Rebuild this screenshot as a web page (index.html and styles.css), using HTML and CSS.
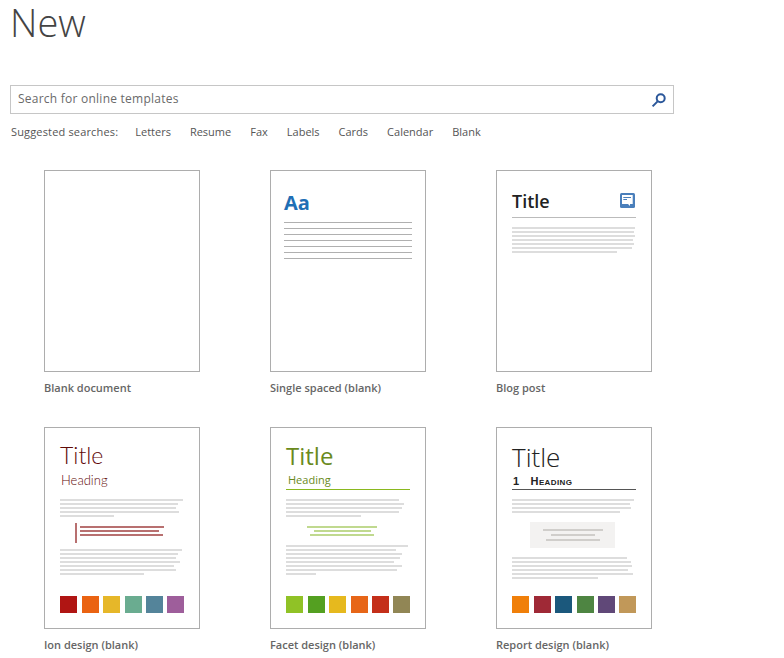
FILE: index.html
```html
<!DOCTYPE html>
<html lang="en">
    <head>
        <meta charset="UTF-8">
        <title>New</title>
        <link rel="stylesheet" href="styles.css">
    </head>
    <body>
        <h1 class="page-title">New</h1>

        <div class="search">
            <span class="search-text">Search for online templates</span>
            <svg class="search-icon" width="16" height="16" viewBox="0 0 16 16">
                <circle cx="9.7" cy="6.3" r="4" fill="none" stroke="#2b579a" stroke-width="2"/>
                <path d="M6.6 9.4 L1.6 14.4" fill="none" stroke="#2b579a" stroke-width="2"/>
            </svg>
        </div>

        <div class="suggested">
            <span class="suggested-label">Suggested searches:</span>
            <span>Letters</span>
            <span>Resume</span>
            <span>Fax</span>
            <span>Labels</span>
            <span>Cards</span>
            <span>Calendar</span>
            <span>Blank</span>
        </div>

        <div class="templates">
            <!-- blank -->
            <div class="template">
                <div class="thumb"></div>
                <div class="label">Blank document</div>
            </div>

            <!-- single spaced -->
            <div class="template">
                <div class="thumb thumb-single">
                    <div class="aa">Aa</div>
                    <div class="rules">
                        <i></i><i></i><i></i><i></i><i></i><i></i><i></i>
                    </div>
                </div>
                <div class="label">Single spaced (blank)</div>
            </div>

            <!-- blog post -->
            <div class="template">
                <div class="thumb">
                    <div class="blog-head">
                        <span class="blog-title">Title</span>
                        <svg width="15" height="15" viewBox="0 0 15 15">
                            <rect width="15" height="15" rx="1.5" fill="#4a7fbb"/>
                            <path d="M2 2 H12.7 V11 H10 V13 L8 11 H2 Z" fill="#fff"/>
                            <path d="M3.3 4.5 H11 M3.3 6.5 H7" stroke="#4a7fbb" stroke-width="1" fill="none"/>
                        </svg>
                    </div>
                    <div class="lines">
                        <i style="width:123px"></i><i style="width:122px"></i><i style="width:123px"></i><i style="width:121px"></i><i style="width:122px"></i><i style="width:120px"></i><i style="width:105px"></i>
                    </div>
                </div>
                <div class="label">Blog post</div>
            </div>

            <!-- ion -->
            <div class="template">
                <div class="thumb">
                    <div class="head">
                        <div class="ion-title">Title</div>
                        <div class="ion-heading">Heading</div>
                    </div>
                    <div class="lines">
                        <i style="width:123px"></i><i style="width:118px"></i><i style="width:116px"></i><i style="width:119px"></i><i style="width:54px"></i>
                    </div>
                    <div class="ion-quote">
                        <div class="lines">
                            <i style="width:84px"></i><i style="width:79px"></i><i style="width:83px"></i>
                        </div>
                    </div>
                    <div class="lines">
                        <i style="width:122px"></i><i style="width:118px"></i><i style="width:116px"></i><i style="width:120px"></i><i style="width:114px"></i><i style="width:116px"></i><i style="width:84px"></i>
                    </div>
                    <div class="swatches">
                        <span style="background:#b01513"></span><span style="background:#ea6312"></span><span style="background:#e6b729"></span><span style="background:#6aac90"></span><span style="background:#54849a"></span><span style="background:#9e5e9b"></span>
                    </div>
                </div>
                <div class="label">Ion design (blank)</div>
            </div>

            <!-- facet -->
            <div class="template">
                <div class="thumb">
                    <div class="head">
                        <div class="facet-title">Title</div>
                        <div class="facet-heading">Heading</div>
                    </div>
                    <div class="lines">
                        <i style="width:113px"></i><i style="width:118px"></i><i style="width:116px"></i><i style="width:113px"></i><i style="width:75px"></i>
                    </div>
                    <div class="lines facet-quote">
                        <i style="width:70px"></i><i style="width:57px"></i><i style="width:64px"></i>
                    </div>
                    <div class="lines">
                        <i style="width:122px"></i><i style="width:110px"></i><i style="width:116px"></i><i style="width:114px"></i><i style="width:108px"></i><i style="width:116px"></i><i style="width:111px"></i><i style="width:30px"></i>
                    </div>
                    <div class="swatches">
                        <span style="background:#90c226"></span><span style="background:#54a021"></span><span style="background:#e6b91e"></span><span style="background:#e76618"></span><span style="background:#c42f1a"></span><span style="background:#918655"></span>
                    </div>
                </div>
                <div class="label">Facet design (blank)</div>
            </div>

            <!-- report -->
            <div class="template">
                <div class="thumb">
                    <div class="head">
                        <div class="report-title">Title</div>
                        <div class="report-heading"><span>1</span><span>Heading</span></div>
                    </div>
                    <div class="lines">
                        <i style="width:122px"></i><i style="width:118px"></i><i style="width:119px"></i><i style="width:108px"></i>
                    </div>
                    <div class="report-quote">
                        <i style="width:60px"></i><i style="width:44px"></i><i style="width:54px"></i>
                    </div>
                    <div class="lines">
                        <i style="width:115px"></i><i style="width:119px"></i><i style="width:120px"></i><i style="width:116px"></i><i style="width:121px"></i><i style="width:86px"></i>
                    </div>
                    <div class="swatches">
                        <span style="background:#f07f09"></span><span style="background:#9f2936"></span><span style="background:#1b587c"></span><span style="background:#4e8542"></span><span style="background:#604878"></span><span style="background:#c19859"></span>
                    </div>
                </div>
                <div class="label">Report design (blank)</div>
            </div>
        </div>
    </body>
</html>
```

FILE: styles.css
```css
body {
    margin: 0;
    background-color: white;
    font-family: "Open Sans", "Noto Sans", sans-serif;
}

.page-title {
    margin: 0 0 0 10px;
    height: 85px;
    font-size: 38px;
    line-height: 44px;
    font-weight: 300;
    color: #444;
}

.search {
    display: flex;
    align-items: center;
    justify-content: space-between;
    box-sizing: border-box;
    width: 664px;
    height: 29px;
    margin-left: 10px;
    padding: 0 6px 2px 7px;
    border: 1px solid #c6c6c6;
}

.search-text {
    font-size: 12px;
    letter-spacing: 0.24px;
    color: #6a6a6a;
}

.search-icon {
    margin-top: 2px;
}

.suggested {
    display: flex;
    gap: 19px;
    margin: 10px 0 0 11px;
    font-size: 11px;
    line-height: 16px;
    color: #555;
}

.suggested-label {
    margin-right: -2px;
    letter-spacing: 0.16px;
}

.templates {
    display: grid;
    grid-template-columns: repeat(3, 156px);
    column-gap: 70px;
    row-gap: 31px;
    margin: 30px 0 0 44px;
}

.thumb {
    display: flex;
    flex-direction: column;
    box-sizing: border-box;
    height: 202px;
    padding: 0 15px 15px;
    border: 1px solid #adadad;
}

.label {
    margin-top: 7px;
    font-size: 11px;
    line-height: 17px;
    font-weight: 600;
    color: #666;
}

/* grey text lines */
.lines {
    display: flex;
    flex-direction: column;
    gap: 2px;
}

.lines i {
    display: block;
    height: 2px;
    background-color: #ddd;
}

.head {
    height: 71px;
}

/* single spaced */
.thumb-single {
    padding-left: 13px;
}

.aa {
    height: 51px;
    font-size: 20px;
    line-height: 63px;
    font-weight: 700;
    color: #1f6fb5;
}

.rules {
    display: flex;
    flex-direction: column;
    gap: 5px;
}

.rules i {
    display: block;
    width: 128px;
    height: 1px;
    background-color: #b0b0b0;
}

/* blog post */
.blog-head {
    display: flex;
    align-items: center;
    justify-content: space-between;
    box-sizing: border-box;
    width: 124px;
    height: 47px;
    margin-bottom: 9px;
    padding: 12px 1px 0 0;
    border-bottom: 1px solid #bbb;
}

.blog-title {
    margin-top: 2px;
    font-size: 18px;
    font-weight: 600;
    color: #222;
}

/* ion */
.ion-title {
    padding-top: 12px;
    font-family: "Lato", sans-serif;
    font-size: 23px;
    line-height: 30px;
    font-weight: 300;
    color: #5f0a08;
}

.ion-heading {
    margin: 2px 0 0 1px;
    font-family: "Lato", sans-serif;
    font-size: 13px;
    line-height: 16px;
    font-weight: 300;
    color: #5f0a08;
}

.ion-quote {
    height: 14px;
    margin: 6px 0 6px 15px;
    padding: 3px 0 3px 3px;
    border-left: 2px solid #b87070;
}

.ion-quote .lines i {
    background-color: #b87070;
}

/* facet */
.facet-title {
    padding-top: 13px;
    font-family: "Open Sans", sans-serif;
    font-size: 24px;
    line-height: 30px;
    color: #6a8a1c;
}

.facet-heading {
    box-sizing: border-box;
    width: 124px;
    height: 19px;
    padding-left: 2px;
    border-bottom: 1px solid #8ab81f;
    font-size: 11px;
    line-height: 18px;
    color: #6a8a1c;
}

.facet-quote {
    align-items: center;
    margin: 9px 12px 9px 0;
    width: 112px;
}

.facet-quote i {
    background-color: #c0d98f;
}

/* report */
.report-title {
    padding-top: 14px;
    font-size: 26px;
    line-height: 30px;
    font-weight: 300;
    color: #222;
}

.report-heading {
    display: flex;
    gap: 11px;
    box-sizing: border-box;
    width: 124px;
    height: 18px;
    padding: 2px 0 0 1px;
    border-bottom: 1px solid #555;
    font-family: "Liberation Sans", sans-serif;
    font-size: 11px;
    line-height: 15px;
    font-weight: 700;
    font-variant: small-caps;
    letter-spacing: 0.4px;
    color: #222;
}

.report-quote {
    display: flex;
    flex-direction: column;
    align-items: center;
    gap: 3px;
    box-sizing: border-box;
    width: 85px;
    height: 26px;
    margin: 9px 0 9px 18px;
    padding-top: 7px;
    background-color: #f3f2f1;
}

.report-quote i {
    display: block;
    height: 2px;
    background-color: #d0cecb;
}

/* colour squares */
.swatches {
    display: flex;
    gap: 4px;
    margin-top: auto;
}

.swatches span {
    width: 17px;
    height: 17px;
}

.swatches span:nth-child(2),
.swatches span:nth-child(4) {
    margin-left: 1px;
}
```
